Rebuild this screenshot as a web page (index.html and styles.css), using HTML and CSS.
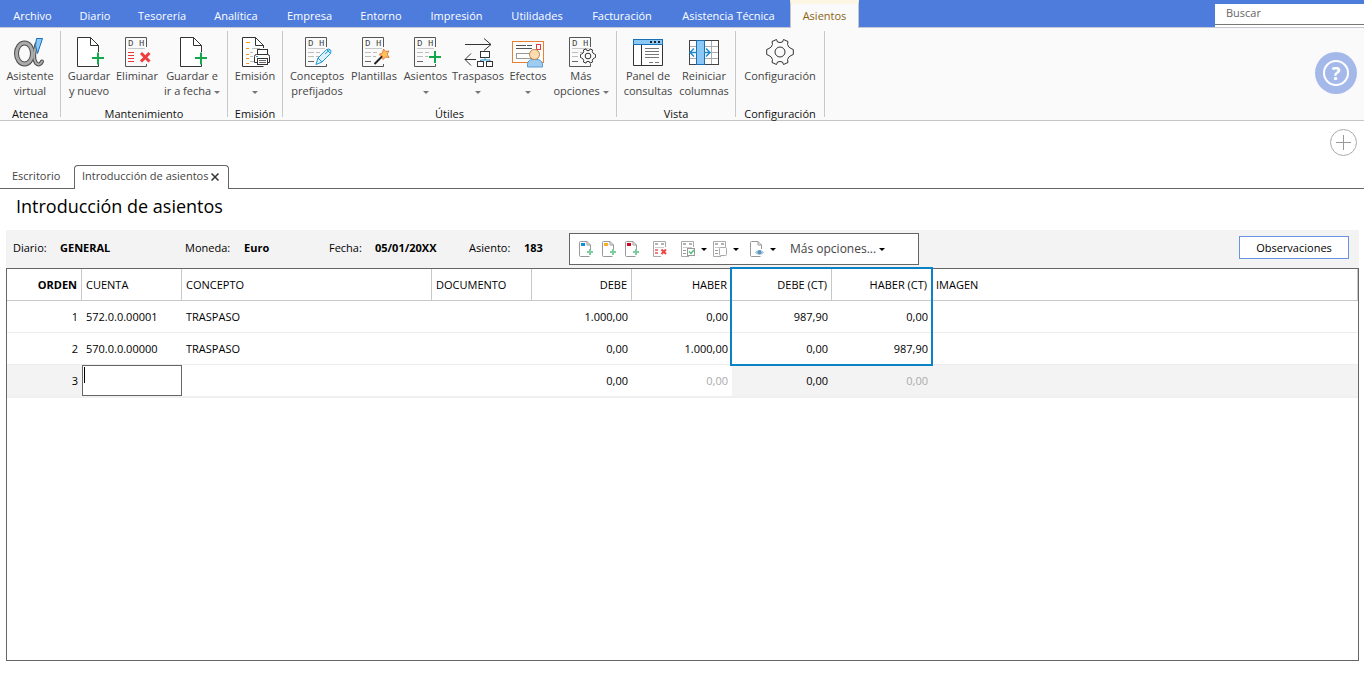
FILE: index.html
```html
<!DOCTYPE html>
<html lang="es">
<head>
<meta charset="utf-8">
<title>Introducción de asientos</title>
<link rel="stylesheet" href="styles.css">
</head>
<body>
<svg class="defs" aria-hidden="true">
  <symbol id="page-plus" viewBox="0 0 32 32">
    <path d="M25.5 16V9.500L17.500 1.500H4.500V30.500H25.500V28M17.500 1.500V9.500H25.500" fill="#fff" stroke="#333"/>
    <path d="M25 16.500V28.500M19 22H31" stroke="#12a84b" stroke-width="2" fill="none"/>
  </symbol>
  <symbol id="ledger" viewBox="0 0 32 32">
    <path d="M25.500 11V1.500H4.500V30.500H25.500V28" fill="none" stroke="#555"/>
    <text x="7" y="10" class="glyph">D</text><text x="18" y="10" class="glyph">H</text>
    <path d="M7 12.500H24" stroke="#c8c8c8"/>
  </symbol>
  <symbol id="ledger-lines" viewBox="0 0 32 32">
    <path d="M7 16.500H13M7 20.500H13M15 16.500H19M15 20.500H18" stroke="#bbb"/>
    <path d="M7 25.500H13" stroke="#666"/>
  </symbol>
  <symbol id="gear" viewBox="0 0 28 28">
    <path d="M10.500 1.500L11.500 4Q14 5 16.500 4L17.500 1.500L22 3.500L21.500 6.500Q22.500 9.500 25 10.500L27.300 11.500V16.500L25 17.500Q22.500 18.500 21.500 21.500L22 24.500L17.500 26.500L16.500 24Q14 23 11.500 24L10.500 26.500L6 24.500L6.500 21.500Q5.500 18.500 3 17.500L.7 16.500V11.500L3 10.500Q5.500 9.500 6.500 6.500L6 3.500Z" fill="#fafafa" stroke="#333" stroke-linejoin="round" vector-effect="non-scaling-stroke"/>
    <circle cx="14" cy="14" r="5" fill="#fafafa" stroke="#333" vector-effect="non-scaling-stroke"/>
  </symbol>
  <symbol id="mini-page" viewBox="0 0 16 18">
    <path d="M11.500 9V5L8 1.500H1.500Q.5 1.500 .5 2.500V15.500Q.5 16.500 1.500 16.500H10.500M8 1.500V5H11.500" fill="none" stroke="#999"/>
  </symbol>
  <symbol id="mini-plus" viewBox="0 0 16 18">
    <path d="M11 9V15M8 12H14" stroke="#7fcd9e" stroke-width="2"/>
  </symbol>
  <symbol id="mini-ledger" viewBox="0 0 16 18">
    <path d="M12.500 7V1.500H.500V16.500H8" fill="none" stroke="#aaa"/>
    <path d="M3 3V5M4 4H5M9 3V5M10 4H11" stroke="#666"/>
    <path d="M2 7.500H11" stroke="#ccc"/>
  </symbol>
</svg>

<header class="app-head">
  <nav class="menu" aria-label="Menú principal">
    <a class="menu-item" href="#archivo">Archivo</a>
    <a class="menu-item" href="#diario">Diario</a>
    <a class="menu-item" href="#tesoreria">Tesorería</a>
    <a class="menu-item" href="#analitica">Analítica</a>
    <a class="menu-item" href="#empresa">Empresa</a>
    <a class="menu-item" href="#entorno">Entorno</a>
    <a class="menu-item" href="#impresion">Impresión</a>
    <a class="menu-item" href="#utilidades">Utilidades</a>
    <a class="menu-item" href="#facturacion">Facturación</a>
    <a class="menu-item" href="#asistencia">Asistencia Técnica</a>
    <a class="menu-item active" href="#asientos" aria-current="page">Asientos</a>
  </nav>
  <input class="search" type="search" placeholder="Buscar" aria-label="Buscar">
</header>

<section class="ribbon" aria-label="Asientos">
  <div class="group g-atenea">
    <div class="tools">
      <button class="tool"><svg class="icon" viewBox="0 0 32 32"><g fill="none" stroke-linecap="round"><g stroke="#4c4c4c"><ellipse cx="10.500" cy="17.500" rx="8" ry="10.500" stroke-width="5"/><path d="M22.500 8Q18 22 22 27Q25.500 30.500 28 25.500" stroke-width="4"/></g><g stroke="#ababab"><ellipse cx="10.500" cy="17.500" rx="8" ry="10.500" stroke-width="3"/><path d="M22.500 8Q18 22 22 27Q25.500 30.500 28 25.500" stroke-width="2"/></g></g><path d="M22.500 2.500H28.500L23.500 17.500Q20 9 22.500 2.500Z" fill="#8cc8f5" stroke="#1b6fb5"/></svg><span>Asistente<br>virtual</span></button>
    </div>
    <h2 class="group-name">Atenea</h2>
  </div>
  <div class="group g-mant">
    <div class="tools">
      <button class="tool"><svg class="icon"><use href="#page-plus"/></svg><span>Guardar<br>y nuevo</span></button>
      <button class="tool"><svg class="icon" viewBox="0 0 32 32"><use href="#ledger"/><path d="M7 16.500H13M7 19.500H13M7 22.500H13M7 25.500H13" stroke="#e8383d"/><path d="M20 17L28.500 25.500M28.500 17L20 25.500" stroke="#ee3d3d" stroke-width="3"/></svg><span>Eliminar</span></button>
      <button class="tool"><svg class="icon"><use href="#page-plus"/></svg><span>Guardar e<br>ir a fecha <i class="caret"></i></span></button>
    </div>
    <h2 class="group-name">Mantenimiento</h2>
  </div>
  <div class="group g-emi">
    <div class="tools">
      <button class="tool"><svg class="icon" viewBox="0 0 32 32"><path d="M24.500 12V9.500L16.500 1.500H3.500V30.500H24.500M16.500 1.500V9.500H24.500" fill="#fff" stroke="#333"/><path d="M7 6.500H11M7 12.500H10M7 18.500H10M7 22.500H10M7 27.500H10" stroke="#f39a1d"/><path d="M13 12.500H21M11 16.500H14M11 20.500H14M11 25.500H15" stroke="#bbb"/><rect x="18.500" y="13.500" width="10" height="5" fill="#fff" stroke="#333"/><path d="M18.500 26.500H15.500V20.500Q15.500 18.500 17.500 18.500H28.500Q30.500 18.500 30.500 20.500V26.500H28.500" fill="#fff" stroke="#333"/><rect x="18.500" y="22.500" width="10" height="6" fill="#fff" stroke="#333"/><path d="M20 24.500H27M20 26.500H27" stroke="#666"/><path d="M17 20.500H19" stroke="#2b93d1"/></svg><span>Emisión<br><i class="caret"></i></span></button>
    </div>
    <h2 class="group-name">Emisión</h2>
  </div>
  <div class="group g-util">
    <div class="tools">
      <button class="tool"><svg class="icon" viewBox="0 0 32 32"><use href="#ledger"/><use href="#ledger-lines"/><path d="M15 28.500L17 22L25.500 13.500L29.500 17.500L21 26ZM17 22L21 26M24 18L29 13.500M25.500 13.500Q28 12 30 14.500L29.500 17.500" fill="#dff1fb" stroke="#1d9ad6"/></svg><span>Conceptos<br>prefijados</span></button>
      <button class="tool"><svg class="icon" viewBox="0 0 32 32"><use href="#ledger"/><use href="#ledger-lines"/><path d="M16.500 28L25 19.500" stroke="#222" stroke-width="2"/><path d="M25.500 13L27.500 15.500L31 15L29 18L31 21.500L27.500 21L25 23.500L24.500 20L21 18.500L24.500 17Z" fill="#fcc55c" stroke="#e9793c"/></svg><span>Plantillas</span></button>
      <button class="tool"><svg class="icon" viewBox="0 0 32 32"><use href="#ledger"/><use href="#ledger-lines"/><path d="M25 15V27M19 21H31" stroke="#12a84b" stroke-width="2"/></svg><span>Asientos<br><i class="caret"></i></span></button>
      <button class="tool"><svg class="icon" viewBox="0 0 32 32"><path d="M3 8.500H29M22 2.500L29 8.500L22 14.500M14 23.500H3M9 17.500L3 23.500L9 29.500" fill="none" stroke="#333"/><rect x="18.500" y="15.500" width="9" height="6" fill="#fff" stroke="#333"/><path d="M23 21.500V24M18.500 26V24H28V26" fill="none" stroke="#2b93d1"/><rect x="15.500" y="25.500" width="6" height="5" fill="#fff" stroke="#333"/><rect x="24.500" y="25.500" width="6" height="5" fill="#fff" stroke="#333"/></svg><span>Traspasos<br><i class="caret"></i></span></button>
      <button class="tool"><svg class="icon" viewBox="0 0 32 32"><rect x=".5" y="5.500" width="31" height="21" fill="#fff" stroke="#e88031"/><path d="M4 9.500H14M4 12.500H20M15 9.500H20" stroke="#555"/><rect x="4.500" y="17.500" width="16" height="5" fill="#fff" stroke="#999"/><rect x="24.500" y="8.500" width="4" height="5" fill="#fff" stroke="#e83d3d"/><path d="M15.500 31V28Q16 23.500 21 23.500H25Q29.500 23.500 30.500 28V31Z" fill="#9fcbf0" stroke="#5a9fd6"/><circle cx="22.500" cy="18.500" r="5" fill="#ffdcb0" stroke="#b9854c"/></svg><span>Efectos<br><i class="caret"></i></span></button>
      <button class="tool"><svg class="icon" viewBox="0 0 32 32"><use href="#ledger"/><use href="#ledger-lines"/><use href="#gear" x="15" y="12" width="16" height="16"/></svg><span>Más<br>opciones <i class="caret"></i></span></button>
    </div>
    <h2 class="group-name">Útiles</h2>
  </div>
  <div class="group g-vista">
    <div class="tools">
      <button class="tool"><svg class="icon" viewBox="0 0 32 32"><path d="M1.500 8V29.500H30.500V8M9.500 8V29.500" fill="#fff" stroke="#333"/><rect x="1.500" y="3.500" width="29" height="5" fill="#8cc8f5" stroke="#1b6fb5"/><path d="M18 6H20M22 6H24M26 6H28" stroke="#222" stroke-width="2"/><path d="M13 12.500H27M13 15.500H27M13 18.500H27M13 21.500H27M17 26.500H21M23 26.500H27" stroke="#777"/></svg><span>Panel de<br>consultas</span></button>
      <button class="tool"><svg class="icon" viewBox="0 0 32 32"><rect x="1.500" y="4.500" width="29" height="24" fill="#fff" stroke="#444"/><path d="M2 10.500H30M2 16.500H30M2 22.500H30M23.500 5V28" stroke="#aaa"/><rect x="8.500" y="4.500" width="8" height="24" fill="#8cc8f5" stroke="#1b6fb5"/><path d="M2 16.500H9M6 12.500L2 16.500L6 20.500M16 16.500H22M18 12.500L22 16.500L18 20.500" fill="none" stroke="#1f8ad0" stroke-width="1.500"/></svg><span>Reiniciar<br>columnas</span></button>
    </div>
    <h2 class="group-name">Vista</h2>
  </div>
  <div class="group g-conf">
    <div class="tools">
      <button class="tool"><svg class="icon" viewBox="0 0 32 32"><use href="#gear" x="2" y="2" width="28" height="28"/></svg><span>Configuración</span></button>
    </div>
    <h2 class="group-name">Configuración</h2>
  </div>
  <button class="help" aria-label="Ayuda"><span class="help-mark">?</span></button>
</section>

<div class="add-row">
  <button class="add" aria-label="Añadir"><svg width="27" height="27" viewBox="0 0 27 27"><circle cx="13.500" cy="13.500" r="13" fill="none" stroke="#aaa"/><path d="M6 13.500H21M13.500 6V21" stroke="#999"/></svg></button>
</div>

<nav class="tabs" aria-label="Pestañas">
  <a class="tab" href="#escritorio">Escritorio</a>
  <div class="tab current"><a href="#introduccion">Introducción de asientos</a><button class="close" aria-label="Cerrar"><svg width="8" height="8" viewBox="0 0 8 8"><path d="M.5 .5L7.500 7.500M7.500 .5L.5 7.500" stroke="#333" stroke-width="1.500"/></svg></button></div>
</nav>

<main class="content">
  <h1 class="title">Introducción de asientos</h1>
  <div class="info">
    <dl class="facts">
      <div class="fact"><dt>Diario:</dt><dd>GENERAL</dd></div>
      <div class="fact"><dt>Moneda:</dt><dd>Euro</dd></div>
      <div class="fact"><dt>Fecha:</dt><dd>05/01/20XX</dd></div>
      <div class="fact"><dt>Asiento:</dt><dd>183</dd></div>
    </dl>
    <div class="toolbar">
      <button class="mini" aria-label="Nuevo azul"><svg class="mini-icon" viewBox="0 0 16 18"><use href="#mini-page"/><path d="M2 4.500H6" stroke="#0a93dc" stroke-width="3"/><use href="#mini-plus"/></svg></button>
      <button class="mini" aria-label="Nuevo amarillo"><svg class="mini-icon" viewBox="0 0 16 18"><use href="#mini-page"/><path d="M2 4.500H6" stroke="#f9ae2b" stroke-width="3"/><use href="#mini-plus"/></svg></button>
      <button class="mini" aria-label="Nuevo rojo"><svg class="mini-icon" viewBox="0 0 16 18"><use href="#mini-page"/><path d="M2 4.500H6" stroke="#d9001b" stroke-width="3"/><use href="#mini-plus"/></svg></button>
      <button class="mini spaced" aria-label="Eliminar línea"><svg class="mini-icon" viewBox="0 0 16 18"><use href="#mini-ledger"/><path d="M2 10H5M2 13H5" stroke="#f08080" stroke-width="2"/><path d="M8.500 9.500L13 14M13 9.500L8.500 14" stroke="#f04545" stroke-width="2"/></svg></button>
      <button class="mini spaced drop" aria-label="Validar"><svg class="mini-icon" viewBox="0 0 16 18"><use href="#mini-ledger"/><path d="M2 10.500H5M2 13.500H5" stroke="#999"/><rect x="6.500" y="8.500" width="7" height="7" fill="#fff" stroke="#999"/><path d="M8 11.500L10 13.500L13 10" fill="none" stroke="#4fbd7b" stroke-width="1.500"/></svg><i class="caret dark"></i></button>
      <button class="mini drop" aria-label="Copiar"><svg class="mini-icon" viewBox="0 0 16 18"><use href="#mini-ledger"/><path d="M2 10.500H5M2 13.500H5" stroke="#999"/><rect x="6.500" y="7.500" width="7" height="8" rx="1" fill="#fff" stroke="#aaa"/></svg><i class="caret dark"></i></button>
      <button class="mini drop spaced" aria-label="Ver documento"><svg class="mini-icon" viewBox="0 0 16 18"><use href="#mini-page"/><path d="M5.500 12.500Q9.500 8.500 13.500 12.500Q9.500 16 5.500 12.500Z" fill="#d5e7f3" stroke="#86b8da"/><circle cx="9.500" cy="12.300" r="2" fill="#5b93bd"/></svg><i class="caret dark"></i></button>
      <button class="more">Más opciones... <i class="caret dark"></i></button>
    </div>
    <button class="notes">Observaciones</button>
  </div>

  <div class="grid-box">
    <table class="entries">
      <colgroup><col class="c-order"><col class="c-std"><col class="c-concept"><col class="c-std"><col class="c-std"><col class="c-std"><col class="c-std"><col class="c-std"><col></colgroup>
      <thead>
        <tr><th class="num order">ORDEN</th><th>CUENTA</th><th>CONCEPTO</th><th>DOCUMENTO</th><th class="num">DEBE</th><th class="num">HABER</th><th class="num">DEBE (CT)</th><th class="num">HABER (CT)</th><th>IMAGEN</th></tr>
      </thead>
      <tbody>
        <tr><td class="num">1</td><td>572.0.0.00001</td><td>TRASPASO</td><td></td><td class="num">1.000,00</td><td class="num">0,00</td><td class="num">987,90</td><td class="num">0,00</td><td></td></tr>
        <tr><td class="num">2</td><td>570.0.0.00000</td><td>TRASPASO</td><td></td><td class="num">0,00</td><td class="num">1.000,00</td><td class="num">0,00</td><td class="num">987,90</td><td></td></tr>
        <tr class="new"><td class="num shade">3</td><td class="edit"><input class="cell-input" type="text" aria-label="Cuenta"></td><td></td><td></td><td class="num">0,00</td><td class="num dim">0,00</td><td class="num shade">0,00</td><td class="num shade dim">0,00</td><td class="shade"></td></tr>
      </tbody>
    </table>
    <div class="highlight"></div>
  </div>
</main>
</body>
</html>
```

FILE: styles.css
```css
* { box-sizing: border-box; }

body {
  margin: 0;
  min-height: 100vh;
  display: flex;
  flex-direction: column;
  background: #fff;
  color: #000;
  font: 11px/15px "Open Sans", "Noto Sans", sans-serif;
}

button {
  margin: 0;
  padding: 0;
  border: 0;
  background: none;
  color: inherit;
  font: inherit;
}

a { color: inherit; text-decoration: none; }
h1, h2, dl, dd { margin: 0; font-weight: 400; }
.defs { display: none; }

/* Menu bar */
.app-head {
  display: flex;
  justify-content: space-between;
  height: 28px;
  background: #4d7cdd;
  border-bottom: 1px solid #c6c9d2;
}
.menu {
  display: grid;
  grid-template-columns: 65px 60px 74px 74px 73px 70px 81px 80px 90px 123px 69px;
}
.menu-item {
  padding-top: 8px;
  color: #fff;
  text-align: center;
  white-space: nowrap;
}
.menu-item.active {
  height: 28px;
  padding-top: 4px;
  border: 1px solid #c6c6c6;
  border-top: 4px solid #fdf6e3;
  border-bottom: 0;
  background: #fafafa;
  color: #8a6410;
}
.search {
  width: 149px;
  height: 21px;
  margin-top: 4px;
  padding: 0 11px 3px;
  border: 0;
  border-bottom: 1px solid #777;
  border-radius: 0;
  outline: 0;
  background: #fff;
  box-shadow: 0 2px #fff;
  font: inherit;
  appearance: none;
}
.search::placeholder { color: #666; opacity: 1; }

/* Ribbon */
.ribbon {
  display: flex;
  height: 93px;
  padding-top: 3px;
  background: #fafafa;
  border-bottom: 1px solid #c6c6c6;
}
.group {
  display: flex;
  flex-direction: column;
  height: 86px;
  border-right: 1px solid #c8c8c8;
}
.tools { display: grid; flex: none; height: 75px; padding-top: 5px; }
.g-atenea { width: 61px; }
.g-mant { width: 167px; }
.g-mant .tools { grid-template-columns: 50px 46px 64px; padding-left: 3px; }
.g-emi { width: 55px; }
.g-util { width: 334px; }
.g-util .tools { grid-template-columns: 56px 58px 45px 60px 40px 66px; padding-left: 6px; }
.g-vista { width: 119px; }
.g-vista .tools { grid-template-columns: 52px 60px; padding-left: 5px; }
.g-conf { width: 89px; }
.tool {
  display: flex;
  flex-direction: column;
  align-items: center;
  color: #444;
  white-space: nowrap;
}
.icon { width: 32px; height: 32px; fill: none; }
.glyph { fill: #444; stroke: none; font: 9px "Liberation Mono", monospace; }
.group-name { color: #111; font-size: 11px; text-align: center; }
.caret {
  display: inline-block;
  width: 0;
  height: 0;
  vertical-align: middle;
  border: 3px solid transparent;
  border-top-color: #777;
  border-bottom: 0;
}
.caret.dark { border-top-color: #000; }
.help {
  align-self: center;
  display: grid;
  place-items: center;
  width: 42px;
  height: 42px;
  margin: 0 7px 5px auto;
  border-radius: 50%;
  background: #a4b9ea;
}
.help-mark {
  display: grid;
  place-items: center;
  width: 26px;
  height: 26px;
  border: 2px solid #fff;
  border-radius: 50%;
  color: #fff;
  font: bold 18px/20px "Noto Sans", sans-serif;
}

.add-row { display: flex; justify-content: flex-end; padding: 8px 7px 8px 0; }
.add { height: 27px; }
.add svg { display: block; }

/* Document tabs */
.tabs {
  display: flex;
  height: 25px;
  border-bottom: 1px solid #666;
  color: #444;
}
.tab { width: 74px; padding: 4px 12px; }
.tab.current {
  display: flex;
  align-items: center;
  justify-content: space-between;
  width: 155px;
  height: 24px;
  margin-top: 1px;
  padding: 0 9px 4px 7px;
  border: 1px solid #666;
  border-bottom: 0;
  border-radius: 4px 4px 0 0;
  background: #fff;
  box-shadow: 0 1px #fff;
  white-space: nowrap;
}
.close svg { display: block; margin-top: 2px; }

/* Entry header */
.content { flex: 1; display: flex; flex-direction: column; padding: 0 5px 14px 6px; }
.title { padding: 5px 10px 12px; font-size: 18px; line-height: 24px; }
.info {
  display: flex;
  align-items: center;
  height: 38px;
  padding: 0 10px 0 7px;
  background: #f3f3f3;
}
.facts { display: grid; grid-template-columns: 172px 144px 140px 100px; padding-bottom: 3px; }
.fact { display: flex; }
.fact dt { width: 47px; }
.fact:nth-child(2) dt { width: 59px; }
.fact:nth-child(3) dt { width: 46px; }
.fact:nth-child(4) dt { width: 55px; }
.fact dd { font-weight: 700; }
.toolbar {
  display: flex;
  align-items: center;
  width: 350px;
  height: 32px;
  padding-left: 9px;
  border: 1px solid #666;
  background: #fff;
}
.mini { display: flex; align-items: center; width: 23px; }
.mini.spaced { margin-left: 5px; }
.mini.drop { width: 32px; gap: 4px; }
.mini-icon { width: 16px; height: 18px; }
.more { margin-left: 8px; padding-bottom: 2px; color: #444; font-size: 12px; }
.notes {
  width: 110px;
  height: 23px;
  margin: 0 0 3px auto;
  border: 1px solid #6b93e3;
  background: #fff;
}

/* Entries grid */
.grid-box { position: relative; flex: 1; border: 1px solid #666; }
.entries { width: 100%; border-collapse: separate; border-spacing: 0; table-layout: fixed; }
.c-order { width: 75px; }
.c-std { width: 100px; }
.c-concept { width: 250px; }
.entries th, .entries td {
  height: 32px;
  padding: 0 4px;
  border-bottom: 1px solid #ededed;
  text-align: left;
  white-space: nowrap;
}
.entries th { border-right: 1px solid #c8c8c8; border-bottom-color: #c8c8c8; font-weight: 400; }
.entries .num { text-align: right; }
.entries .order { font-weight: 700; }
.entries .new td { height: 33px; border-bottom: 2px solid #f0f0f0; }
.entries .shade { background: #f3f3f3; }
.entries .dim { color: #aaa; }
.entries .edit { padding: 0; }
.cell-input {
  display: block;
  width: 100%;
  height: 31px;
  padding: 0 4px;
  border: 1px solid #666;
  border-radius: 0;
  outline: 0;
  background: linear-gradient(#000, #000) 1px 1px / 1px 16px no-repeat #fff;
  font: inherit;
}
/* Frame around the countervalue columns */
.highlight {
  position: absolute;
  top: -2px;
  left: 723px;
  width: 203px;
  height: 99px;
  border: 2px solid #0a83c6;
  pointer-events: none;
}
```
